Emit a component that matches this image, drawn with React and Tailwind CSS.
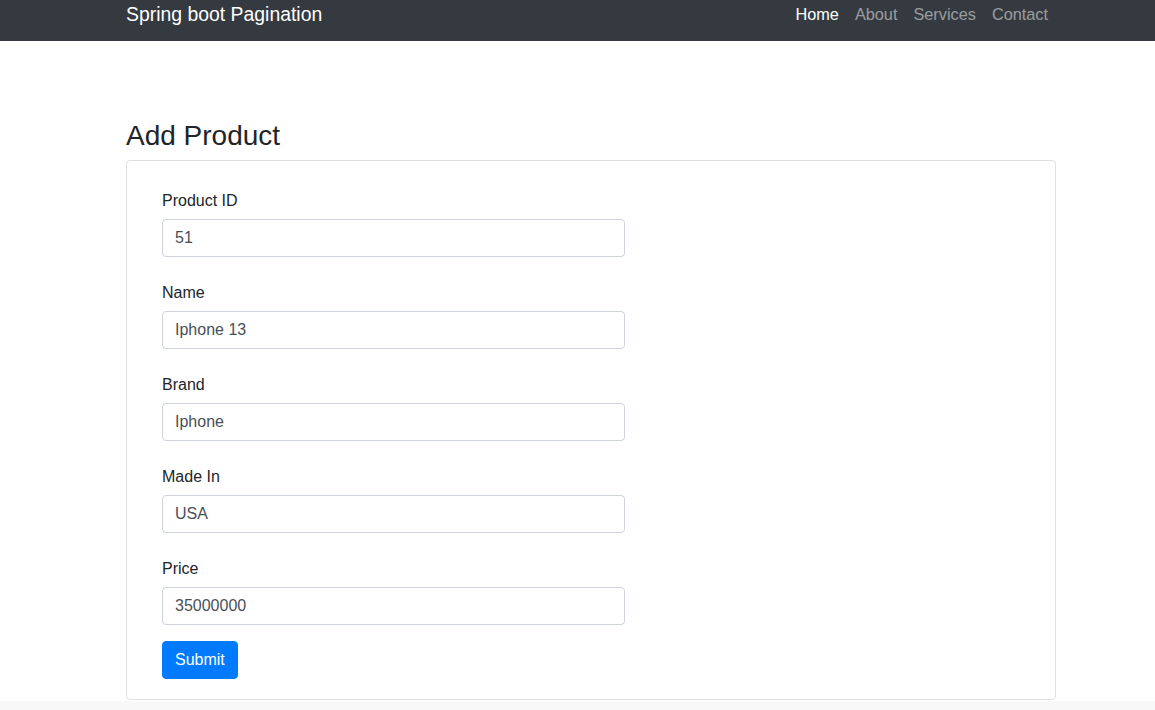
import React from 'react';

const fields = [
    { label: 'Product ID', value: '51' },
    { label: 'Name', value: 'Iphone 13' },
    { label: 'Brand', value: 'Iphone' },
    { label: 'Made In', value: 'USA' },
    { label: 'Price', value: '35000000' },
];

const App = () => {
    return (
        <div className="min-h-screen bg-white text-[#212529]" style={{ fontFamily: '"Liberation Sans", Arial, sans-serif' }}>
            {/* Navbar */}
            <nav className="h-[41px] bg-[#343a40] pt-px">
                <div className="w-[930px] ml-[126px] flex items-center justify-between h-[26px]">
                    <span className="text-[19.4px] text-white leading-[30px]">Spring boot Pagination</span>
                    <ul className="flex items-center text-[16.3px] leading-6">
                        <li className="px-2 text-white">Home</li>
                        <li className="px-2 text-white/50">About</li>
                        <li className="px-2 text-white/50">Services</li>
                        <li className="px-2 text-white/50">Contact</li>
                    </ul>
                </div>
            </nav>

            <main className="w-[930px] ml-[126px] pt-[78px]">
                <h3 className="text-[28px] leading-[1.2] font-medium mb-[7px]">Add Product</h3>
                <div className="border border-[#dfdfdf] rounded px-[35px] pt-[28px] pb-5">
                    <form className="flex flex-col gap-4">
                        <div className="flex flex-col gap-6">
                            {fields.map((f) => (
                                <div key={f.label}>
                                    <label className="block text-[16px] leading-6 mb-[6px]">{f.label}</label>
                                    <input
                                        type="text"
                                        defaultValue={f.value}
                                        className="block w-[463px] h-[38px] px-3 border border-[#ced4da] rounded text-[16px] text-[#495057] outline-none"
                                    />
                                </div>
                            ))}
                        </div>
                        <div>
                            <button type="button" className="h-[38px] px-3 bg-[#007bff] border border-[#007bff] text-white text-[16px] rounded">
                                Submit
                            </button>
                        </div>
                    </form>
                </div>
            </main>
            <div className="mt-[1px] h-3 bg-[#f8f8f8]"></div>
        </div>
    );
};

export default App;
